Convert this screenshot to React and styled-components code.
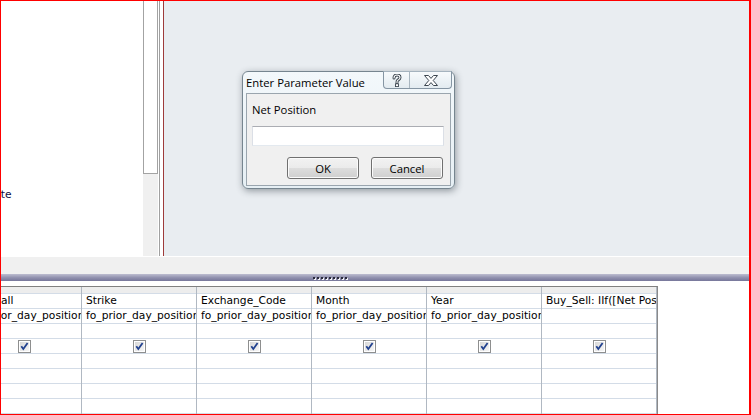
import React from "react";
import styled, { createGlobalStyle } from "styled-components";

const GlobalStyle = createGlobalStyle`
  html, body {
    margin: 0;
    padding: 0;
    overflow: hidden;
    background: #ffffff;
  }
`;

const Screen = styled.div`
  width: 751px;
  height: 415px;
  box-sizing: border-box;
  border: 1px solid #ff0000;
  border-right-width: 2px;
  display: flex;
  flex-direction: column;
  background: #ffffff;
  font-family: "DejaVu Sans", Verdana, sans-serif;
  overflow: hidden;
`;

const TopArea = styled.div`
  height: 255px;
  display: flex;
  background: #ffffff;
`;

const LeftPane = styled.div`
  width: 142px;
  overflow: hidden;
  padding-top: 187px;
  box-sizing: border-box;
`;

const FieldItem = styled.div`
  font-size: 10.7px;
  line-height: 14px;
  color: #0c0c3c;
  white-space: nowrap;
  text-indent: ${(p) => p.$shift || 0}px;
`;

const ScrollTrack = styled.div`
  width: 15px;
  background: #f0f0f0;
  display: flex;
  flex-direction: column;
`;

const ScrollThumb = styled.div`
  height: 173px;
  box-sizing: border-box;
  border: 1px solid #a3a3a3;
  border-top: none;
  background: #ffffff;
`;

const PaneDivider = styled.div`
  width: 3px;
  margin-left: 1px;
  border-left: 1px solid #a0a0a0;
  border-right: 1px solid #9e3a3a;
  background: #ffffff;
`;

const Canvas = styled.div`
  flex: 1;
  position: relative;
  background: #e9edf1;
`;

const Dialog = styled.div`
  position: absolute;
  left: 78px;
  top: 70px;
  width: 213px;
  height: 118px;
  box-sizing: border-box;
  border: 1px solid #76858f;
  border-radius: 6px;
  background: linear-gradient(#f3f8fb, #e6eff4);
  box-shadow: 1px 2px 7px rgba(40, 50, 60, 0.45);
  display: flex;
  flex-direction: column;
  font-family: "Open Sans", "Noto Sans", sans-serif;
`;

const TitleBar = styled.div`
  height: 21px;
  display: flex;
  align-items: center;
  padding-left: 3px;
`;

const Caption = styled.span`
  font-size: 11.3px;
  color: #000000;
  white-space: nowrap;
`;

const CaptionButtons = styled.div`
  margin-left: auto;
  margin-right: 2px;
  align-self: flex-start;
  margin-top: -1px;
  height: 18px;
  display: flex;
  box-sizing: border-box;
  border: 1px solid #8595a3;
  border-top-color: #a5b3be;
  border-radius: 0 0 4px 4px;
  background: linear-gradient(#f7fafc, #e3ebf0);
  overflow: hidden;
`;

const CaptionButton = styled.div`
  width: ${(p) => p.$w}px;
  display: flex;
  align-items: center;
  justify-content: center;
  box-sizing: border-box;
  border-left: ${(p) => (p.$divider ? "1px solid #a9b6c0" : "none")};
`;

const ClientArea = styled.div`
  flex: 1;
  margin: 0 3px 2px 3px;
  border: 1px solid #9aa5ae;
  background: #f0f0f0;
  display: flex;
  flex-direction: column;
  padding: 8px 6px 0 5px;
`;

const PromptLabel = styled.div`
  font-size: 11.3px;
  line-height: 15px;
  color: #000000;
`;

const ValueInput = styled.input`
  margin-top: 9px;
  width: 192px;
  height: 20px;
  box-sizing: border-box;
  border: 1px solid #abadb3;
  border-left-color: #dbdfe6;
  border-right-color: #dbdfe6;
  border-bottom-color: #e3e9ef;
  background: #ffffff;
  outline: none;
  padding: 0 3px;
  font-family: inherit;
  font-size: 11.3px;
`;

const ButtonRow = styled.div`
  margin-top: 11px;
  display: flex;
  justify-content: flex-end;
  gap: 12px;
  padding-right: 1px;
`;

const PushButton = styled.button`
  width: 72px;
  height: 22px;
  box-sizing: border-box;
  border: 1px solid #707070;
  border-radius: 3px;
  background: linear-gradient(#f2f2f2 0%, #ebebeb 48%, #dddddd 52%, #cfcfcf 100%);
  box-shadow: inset 0 0 0 1px #fbfbfb;
  font-family: inherit;
  font-size: 11.3px;
  color: #000000;
  padding: 0;
`;

const WhiteLine = styled.div`
  height: 1px;
  background: #ffffff;
`;

const Strip = styled.div`
  height: 17px;
  background: #f0f0f0;
`;

const SplitterBar = styled.div`
  height: 7px;
  background: linear-gradient(#bdbdd0, #9393b0 50%, #76769a);
  display: flex;
  align-items: center;
  padding-left: 312px;
`;

const Grip = styled.div`
  display: flex;
  gap: 2px;
`;

const GripDot = styled.span`
  width: 2px;
  height: 2px;
  background: #2a2a3c;
  box-shadow: 1px 1px 0 #f4f4f8;
`;

const Gap = styled.div`
  height: 5px;
  background: #ffffff;
`;

const GridArea = styled.div`
  height: 128px;
  display: flex;
  overflow: hidden;
  background: #ffffff;
`;

const Grid = styled.div`
  margin-left: -34px;
  display: flex;
  border-top: 1px solid #808080;
  border-right: 1px solid #8a8a8a;
  align-self: flex-start;
`;

const Column = styled.div`
  width: 115px;
  box-sizing: border-box;
  border-right: 1px solid #b0b8c2;
  display: flex;
  flex-direction: column;
`;

const HeaderCell = styled.div`
  height: 6px;
  background: #ededed;
  border-bottom: 1px solid #d3dce7;
`;

const Cell = styled.div`
  height: 14px;
  border-bottom: 1px solid #d3dce7;
  font-size: 10.7px;
  line-height: 14px;
  color: #000000;
  white-space: nowrap;
  overflow: hidden;
  padding-left: 4px;
  display: flex;
  align-items: center;
  justify-content: ${(p) => (p.$center ? "center" : "flex-start")};
  ${(p) => p.$center && "padding-left: 0;"}
`;

const QuestionIcon = () => (
  <svg width="10" height="13" viewBox="0 0 10 13">
    <path
      d="M2 4 C2 1.6 3.4 1 5 1 C6.8 1 8 2 8 3.6 C8 5.2 6.6 5.6 5.6 6.4 C5 6.9 5 7.4 5 8.4"
      fill="none"
      stroke="#3c4650"
      strokeWidth="3"
      strokeLinecap="round"
    />
    <path
      d="M2 4 C2 1.6 3.4 1 5 1 C6.8 1 8 2 8 3.6 C8 5.2 6.6 5.6 5.6 6.4 C5 6.9 5 7.4 5 8.4"
      fill="none"
      stroke="#ffffff"
      strokeWidth="1.1"
      strokeLinecap="round"
    />
    <rect x="3.5" y="9.8" width="3" height="2.8" fill="#ffffff" stroke="#3c4650" strokeWidth="0.9" />
  </svg>
);

const CloseIcon = () => (
  <svg width="14" height="11" viewBox="0 0 14 11">
    <polygon
      points="0.5,0.5 4.5,0.5 7,3.4 9.5,0.5 13.5,0.5 9.2,5.5 13.5,10.5 9.5,10.5 7,7.6 4.5,10.5 0.5,10.5 4.8,5.5"
      fill="#ffffff"
      stroke="#3c4650"
      strokeWidth="1"
    />
  </svg>
);

const CheckMark = () => (
  <svg width="13" height="13" viewBox="0 0 13 13">
    <defs>
      <linearGradient id="cbFill" x1="0" y1="0" x2="1" y2="1">
        <stop offset="0" stopColor="#d8d8d8" />
        <stop offset="1" stopColor="#f6f6f6" />
      </linearGradient>
    </defs>
    <rect x="0.5" y="0.5" width="12" height="12" fill="#ffffff" stroke="#8e8f8f" />
    <rect x="2" y="2" width="9" height="9" fill="url(#cbFill)" />
    <path d="M3.3 6.3 L5.3 9 L9.6 3" fill="none" stroke="#21418f" strokeWidth="1.8" />
  </svg>
);

const columns = [
  { field: "Put_Call", table: "fo_prior_day_positions", show: true },
  { field: "Strike", table: "fo_prior_day_positions", show: true },
  { field: "Exchange_Code", table: "fo_prior_day_positions", show: true },
  { field: "Month", table: "fo_prior_day_positions", show: true },
  { field: "Year", table: "fo_prior_day_positions", show: true },
  { field: 'Buy_Sell: IIf([Net Position]>0,"B","S")', table: "", show: true },
];

export default function App() {
  return (
    <>
      <GlobalStyle />
      <Screen>
        <TopArea>
          <LeftPane>
            <FieldItem $shift={-15}>Date</FieldItem>
          </LeftPane>
          <ScrollTrack>
            <ScrollThumb />
          </ScrollTrack>
          <PaneDivider />
          <Canvas>
            <Dialog>
              <TitleBar>
                <Caption>Enter Parameter Value</Caption>
                <CaptionButtons>
                  <CaptionButton $w={25}>
                    <QuestionIcon />
                  </CaptionButton>
                  <CaptionButton $w={42} $divider>
                    <CloseIcon />
                  </CaptionButton>
                </CaptionButtons>
              </TitleBar>
              <ClientArea>
                <PromptLabel>Net Position</PromptLabel>
                <ValueInput type="text" defaultValue="" />
                <ButtonRow>
                  <PushButton>OK</PushButton>
                  <PushButton>Cancel</PushButton>
                </ButtonRow>
              </ClientArea>
            </Dialog>
          </Canvas>
        </TopArea>
        <WhiteLine />
        <Strip />
        <SplitterBar>
          <Grip>
            {Array.from({ length: 9 }).map((_, i) => (
              <GripDot key={i} />
            ))}
          </Grip>
        </SplitterBar>
        <Gap />
        <GridArea>
          <Grid>
            {columns.map((c, i) => (
              <Column key={i}>
                <HeaderCell />
                <Cell>{c.field}</Cell>
                <Cell>{c.table}</Cell>
                <Cell />
                <Cell $center>{c.show && <CheckMark />}</Cell>
                <Cell />
                <Cell />
                <Cell />
                <Cell />
              </Column>
            ))}
          </Grid>
        </GridArea>
      </Screen>
    </>
  );
}
